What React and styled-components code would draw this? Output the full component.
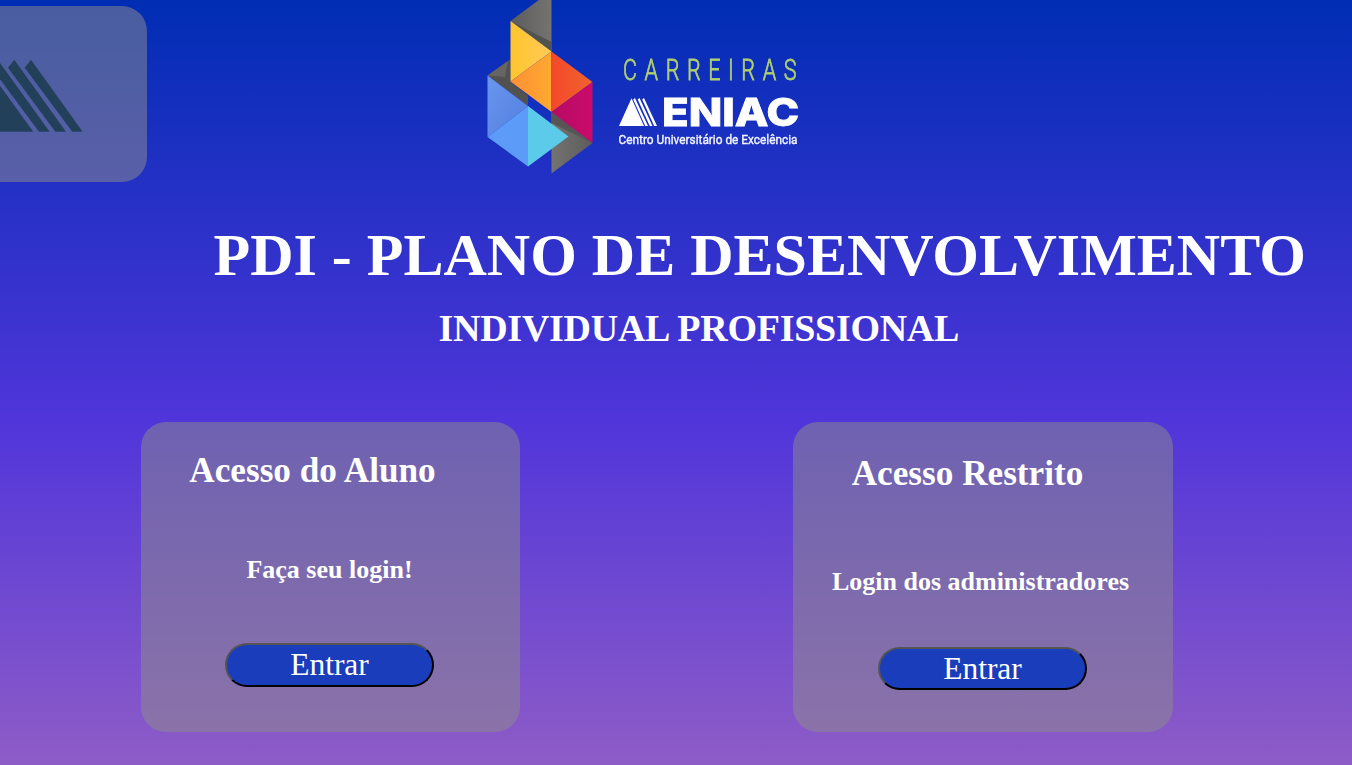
import React from "react";
import styled, { createGlobalStyle } from "styled-components";

const GlobalStyle = createGlobalStyle`
  * { box-sizing: border-box; }
  html, body { margin: 0; padding: 0; }
  body {
    font-family: "Liberation Serif", "Times New Roman", serif;
    color: #fff;
    overflow: hidden;
  }
`;

const Page = styled.div`
  display: flex;
  flex-direction: column;
  height: 765px;
  overflow: hidden;
  background: linear-gradient(180deg, #002db4 0px, #5035da 420px, #8e5cc7 765px);
`;

const Header = styled.header`
  display: flex;
  align-items: flex-start;
  height: 182px;
`;

const BrandCard = styled.div`
  flex: none;
  display: flex;
  align-items: center;
  justify-content: center;
  width: 380px;
  height: 176px;
  margin: 6px 0 0 -233px;
  border-radius: 25px;
  background: rgba(144, 142, 140, 0.5);
`;

const BrandMark = styled.svg`
  display: block;
  width: 380px;
  height: 176px;
`;

const Logo = styled.svg`
  flex: none;
  display: block;
  width: 320px;
  height: 180px;
  margin-left: 333px;
  overflow: visible;
  filter: blur(0.6px);
`;

const Title = styled.h1`
  margin: 40px 0 0 213.5px;
  font-size: 60px;
  line-height: 66px;
  white-space: nowrap;
`;

const Subtitle = styled.h2`
  margin: 19px 0 0 438.5px;
  font-size: 38px;
  line-height: 42px;
  letter-spacing: -0.27px;
  white-space: nowrap;
`;

const Panels = styled.main`
  display: flex;
  gap: 273px;
  margin: 73px 0 0 141px;
`;

const Panel = styled.section`
  display: flex;
  flex-direction: column;
  align-items: center;
  width: ${(p) => p.$width}px;
  height: 310px;
  padding-top: ${(p) => p.$top}px;
  border-radius: 25px;
  background: rgba(141, 141, 138, 0.5);
`;

const PanelTitle = styled.h2`
  margin: 0 ${(p) => p.$shift}px 0 0;
  font-size: 35.2px;
  line-height: 40px;
  white-space: nowrap;
`;

const PanelText = styled.h3`
  margin: ${(p) => p.$top}px ${(p) => p.$shift}px 0 0;
  font-size: 26px;
  line-height: 30px;
  white-space: nowrap;
`;

const EnterButton = styled.button`
  width: 209px;
  height: ${(p) => p.$height}px;
  margin: ${(p) => p.$top}px ${(p) => p.$shift}px 0 0;
  padding: 0;
  border: 2px outset #000;
  border-radius: 25px;
  background: #1a3dbb;
  color: #fff;
  font-family: inherit;
  font-size: 31.5px;
  line-height: 38px;
`;

function CareersLogo() {
  return (
    <Logo viewBox="480 0 320 180" role="img" aria-label="Carreiras Eniac">
      <defs>
        <linearGradient id="yellow"><stop stopColor="#ffc52e" /><stop offset="1" stopColor="#ffc957" /></linearGradient>
        <linearGradient id="orange"><stop stopColor="#ff8f35" /><stop offset="1" stopColor="#ffa930" /></linearGradient>
        <linearGradient id="red"><stop stopColor="#f5482b" /><stop offset="1" stopColor="#ef642d" /></linearGradient>
        <linearGradient id="pink"><stop stopColor="#b50b64" /><stop offset="1" stopColor="#cc0b6b" /></linearGradient>
        <linearGradient id="blue" x2="1" y2="1"><stop stopColor="#6a96ed" /><stop offset="1" stopColor="#527fe0" /></linearGradient>
        <linearGradient id="gray"><stop stopColor="#5c5c5d" /><stop offset="1" stopColor="#747371" /></linearGradient>
        <linearGradient id="grayLow"><stop stopColor="#747371" /><stop offset="1" stopColor="#5c5c5a" /></linearGradient>
      </defs>
      <path d="M510.5 21L551.5 -9.5V51.5Z" fill="url(#gray)" />
      <path d="M510.5 21L551.5 42V51.5Z" fill="#52524f" />
      <path d="M487.5 75.5L510.5 59V81.5L528 95.5V106Z" fill="#51514f" />
      <path d="M487.5 75.5L508 61L505 77Z" fill="#666563" />
      <path d="M551.5 112L592.5 143L551.5 173.5Z" fill="url(#grayLow)" />
      <path d="M551.5 112L592.5 143L551.5 123Z" fill="#575654" />
      <path d="M510.5 21L551.5 51.5L510.5 81.5Z" fill="url(#yellow)" />
      <path d="M551.5 51.5V112L510.5 81.5Z" fill="url(#orange)" />
      <path d="M551.5 51.5L592.5 82L551.5 112Z" fill="url(#red)" />
      <path d="M592.5 82V143L551.5 112Z" fill="url(#pink)" />
      <path d="M487.5 75.5L528 106L487.5 137Z" fill="url(#blue)" />
      <path d="M528 106V166.5L487.5 137Z" fill="#5d9bf8" />
      <path d="M528 106L568.5 136.5L528 166.5Z" fill="#5bcbe9" />
      <g transform="translate(623 80) scale(.72 1)" fill="#b0cf70" stroke="#b0cf70" strokeWidth=".8" fontFamily="Roboto, sans-serif" fontWeight="300" fontSize="30">
        <text textLength="241" lengthAdjust="spacing">CARREIRAS</text>
      </g>
      <g fill="#fff">
        <path d="M619 126L631.5 98.3L644 126Z" />
        <path d="M633.2 99.5L635 98L648 126H645.2Z" />
        <path d="M637.7 99.5L639.5 98L652.5 126H649.7Z" />
        <path d="M642.2 99.5L644 98L657 126H654.2Z" />
      </g>
      <text transform="translate(662 126)" fill="#fff" stroke="#fff" strokeWidth=".8" fontFamily="Inter, sans-serif" fontWeight="800" fontSize="38.5" textLength="137" lengthAdjust="spacingAndGlyphs">ENIAC</text>
      <text x="618.5" y="143.7" fill="#f2f4ff" stroke="#f2f4ff" strokeWidth=".4" fontFamily="Roboto, sans-serif" fontSize="13.6" textLength="179" lengthAdjust="spacingAndGlyphs">Centro Universitário de Excelência</text>
    </Logo>
  );
}

export default function App() {
  return (
    <>
      <GlobalStyle />
      <Page>
        <Header>
          <BrandCard>
            <BrandMark viewBox="-233 6 380 176" fill="#23405b">
              <path d="M31 59.7L82.7 131.7H72.3L24.7 67.7Z" />
              <path d="M14.3 59.7L66 131.7H55.3L8 67.7Z" />
              <path d="M-2.3 59.7L49.7 131.7H39L-8.7 67.7Z" />
              <path d="M-19 59.7L33.3 131.7H-71Z" />
            </BrandMark>
          </BrandCard>
          <CareersLogo />
        </Header>
        <Title>PDI - PLANO DE DESENVOLVIMENTO</Title>
        <Subtitle>INDIVIDUAL PROFISSIONAL</Subtitle>
        <Panels>
          <Panel $width={379} $top={29}>
            <PanelTitle $shift={36}>Acesso do Aluno</PanelTitle>
            <PanelText $top={64} $shift={2}>Faça seu login!</PanelText>
            <EnterButton $top={58} $shift={2} $height={44}>Entrar</EnterButton>
          </Panel>
          <Panel $width={380} $top={32}>
            <PanelTitle $shift={31}>Acesso Restrito</PanelTitle>
            <PanelText $top={73} $shift={5}>Login dos administradores</PanelText>
            <EnterButton $top={50} $shift={1} $height={43}>Entrar</EnterButton>
          </Panel>
        </Panels>
      </Page>
    </>
  );
}
